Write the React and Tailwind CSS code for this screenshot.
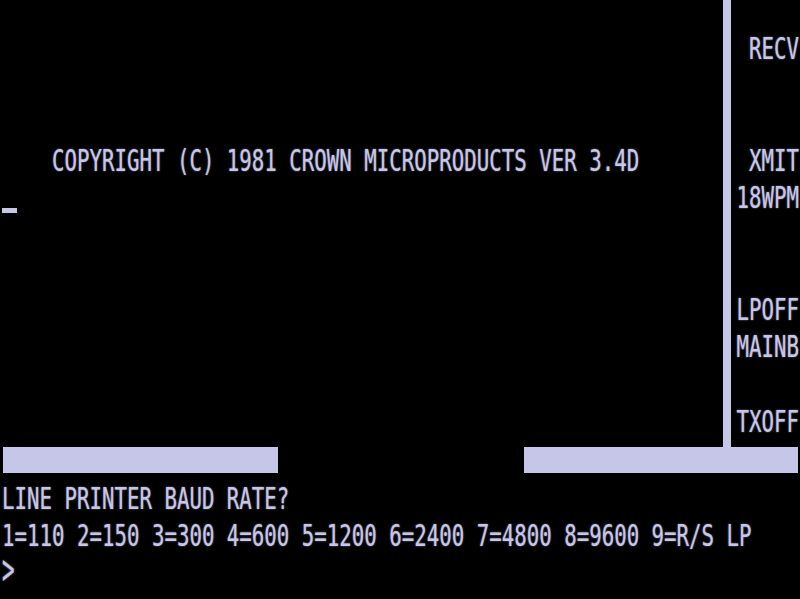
import React from "react";

const FONT = { fontFamily: '"DejaVu Sans Mono", "Liberation Mono", monospace' };

function Txt({ children }) {
  return (
    <div
      className="origin-top scale-y-[1.454] -mt-[3px] text-[20.76px] leading-[20.76px] whitespace-pre text-[#c6c6e8] [text-shadow:0_0_1.5px_rgba(198,198,232,0.7)]"
      style={FONT}
    >
      {children}
    </div>
  );
}

function Row({ children, className = "" }) {
  return <div className={"h-[37.25px] flex " + className}>{children}</div>;
}

export default function App() {
  const left = [
    "", "", "", "",
    "    COPYRIGHT (C) 1981 CROWN MICROPRODUCTS VER 3.4D",
  ];
  const right = ["", "RECV", "", "", "XMIT", "18WPM", "", "", "LPOFF", "MAINB", "", "TXOFF"];
  return (
    <div className="w-[800px] h-[599px] bg-black overflow-hidden flex flex-col">
      <div className="flex h-[447px]">
        <div className="w-[723px] flex flex-col pl-[2px]">
          {left.map((t, i) => (
            <Row key={i}>
              <Txt>{t}</Txt>
            </Row>
          ))}
          <Row>
            <div className="mt-[22px] w-[15px] h-[5px] bg-[#c6c6e8]" />
          </Row>
        </div>
        <div className="w-[8px] bg-[#c6c6e8]" />
        <div className="flex-1 flex flex-col items-end pr-[1px]">
          {right.map((t, i) => (
            <Row key={i}>
              <Txt>{t}</Txt>
            </Row>
          ))}
        </div>
      </div>
      <div className="flex h-[26px]">
        <div className="ml-[3px] w-[275px] bg-[#c6c6e8]" />
        <div className="flex-1" />
        <div className="w-[274px] mr-[2px] bg-[#c6c6e8]" />
      </div>
      <div className="pt-[14px] pl-[2px] flex flex-col">
        <div className="h-[37.4px] flex">
          <Txt>LINE PRINTER BAUD RATE?</Txt>
        </div>
        <div className="h-[37.4px] flex">
          <Txt>1=110 2=150 3=300 4=600 5=1200 6=2400 7=4800 8=9600 9=R/S LP</Txt>
        </div>
        <div className="h-[37.4px] flex">
          <div
            className="origin-top scale-y-[2.06] -mt-[5px] text-[20.76px] leading-[12px] whitespace-pre text-[#c6c6e8] [text-shadow:0_0_1.5px_rgba(198,198,232,0.7)]"
            style={FONT}
          >
            &gt;
          </div>
        </div>
      </div>
    </div>
  );
}
